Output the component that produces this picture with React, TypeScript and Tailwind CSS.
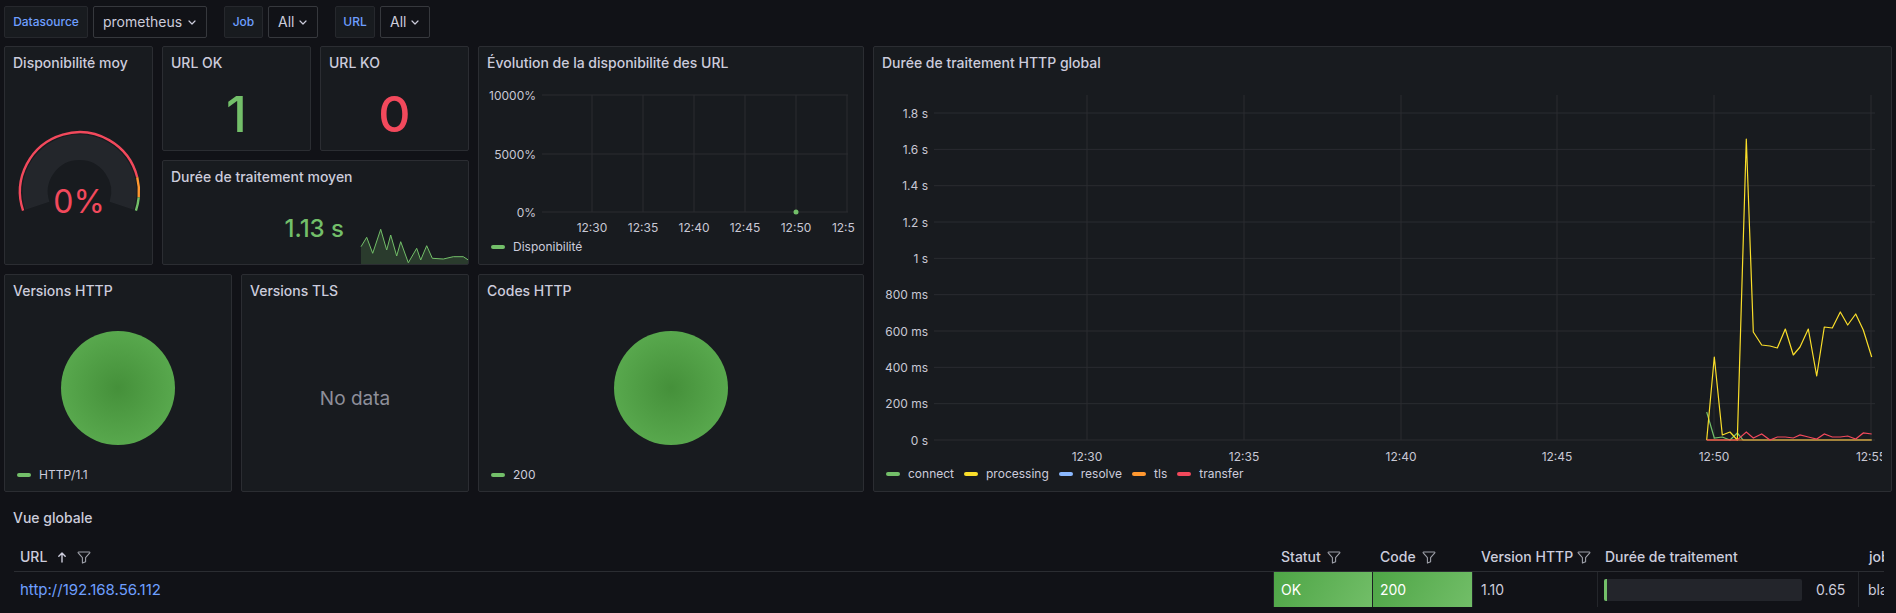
import React from 'react'

type Pt = [number, number]

const toPath = (pts: Pt[]) => pts.map((p, i) => `${i ? 'L' : 'M'}${p[0]} ${p[1]}`).join(' ')

const GRID = '#2a2c31'
const AXIS = '#c8c8d4'

function Chevron() {
  return (
    <svg width="8" height="5" viewBox="0 0 8 5" className="shrink-0">
      <path d="M1 1l3 3 3-3" fill="none" stroke="#ccccdc" strokeWidth="1.2" strokeLinecap="round" strokeLinejoin="round" />
    </svg>
  )
}

function FilterIcon() {
  return (
    <svg width="14" height="14" viewBox="0 0 14 14" className="shrink-0">
      <path
        d="M1.6 2h10.8a.5.5 0 0 1 .38.82L8.6 7.6v4.1l-3.2 1.4V7.6L1.22 2.82A.5.5 0 0 1 1.6 2z"
        fill="none"
        stroke="#9ea0a9"
        strokeWidth="1.1"
        strokeLinejoin="round"
      />
    </svg>
  )
}

function ArrowUp() {
  return (
    <svg width="10" height="12" viewBox="0 0 10 12" className="shrink-0">
      <path d="M5 11V2M1.8 5.2L5 2l3.2 3.2" fill="none" stroke="#ccccdc" strokeWidth="1.4" strokeLinecap="round" strokeLinejoin="round" />
    </svg>
  )
}

function Variable({ label, value, labelW, dropW }: { label: string; value: string; labelW: string; dropW: string }) {
  return (
    <div className="flex gap-[5px]">
      <div className={`${labelW} flex h-8 items-center justify-center rounded-[2px] border border-[#26282d] bg-[#181b1f] text-xs font-medium text-[#6e9fff]`}>
        {label}
      </div>
      <div className={`${dropW} flex h-8 items-center justify-between rounded-[2px] border border-[#36383d] bg-[#111217] pl-[9px] pr-[10px] text-sm text-[#ccccdc]`}>
        {value}
        <Chevron />
      </div>
    </div>
  )
}

function Panel({ title, className, children }: { title: string; className: string; children?: React.ReactNode }) {
  return (
    <div className={`flex flex-col overflow-hidden rounded-[2px] border border-[#2b2d32] bg-[#181b1f] ${className}`}>
      <div className="flex h-8 shrink-0 items-center px-2 text-sm font-medium text-[#ccccdc]">{title}</div>
      <div className="relative flex min-h-0 flex-1 flex-col">{children}</div>
    </div>
  )
}

function Legend({ items }: { items: { label: string; color: string }[] }) {
  return (
    <div className="flex h-[22px] shrink-0 items-center gap-[10px] pl-[12px] mb-[6px] text-xs text-[#ccccdc]">
      {items.map(it => (
        <div key={it.label} className="flex items-center gap-[8px]">
          <span className={`h-[4px] w-[14px] rounded-full ${it.color}`} />
          {it.label}
        </div>
      ))}
    </div>
  )
}

function Gauge() {
  const cx = 79.5
  const cy = 191.7
  const p = (r: number, a: number): Pt => [cx + r * Math.cos((a * Math.PI) / 180), cy - r * Math.sin((a * Math.PI) / 180)]
  const arc = (r: number, a0: number, a1: number) => {
    const [x0, y0] = p(r, a0)
    const [x1, y1] = p(r, a1)
    return `M${x0} ${y0}A${r} ${r} 0 ${a0 - a1 > 180 ? 1 : 0} 1 ${x1} ${y1}`
  }
  const start = 198.5
  const at = (f: number) => start - 217 * f
  return (
    <svg width="147" height="185" className="block">
      <g transform="translate(-5 -79)">
        <path d={arc(44.4, start, at(1))} stroke="#23262b" strokeWidth="25.4" fill="none" />
        <path d={arc(59.5, start, at(0.85))} stroke="#f2495c" strokeWidth="2.4" fill="none" />
        <path d={arc(59.5, at(0.85), at(0.94))} stroke="#ff9830" strokeWidth="2.4" fill="none" />
        <path d={arc(59.5, at(0.94), at(1))} stroke="#73bf69" strokeWidth="2.4" fill="none" />
        <text x="79" y="201" textAnchor="middle" dominantBaseline="central" fill="#f2495c" fontSize="32">
          0%
        </text>
      </g>
    </svg>
  )
}

const spark: Pt[] = [
  [361, 246.7], [366.7, 237.3], [372.7, 253.3], [380.7, 229.3], [386.7, 250], [390.7, 235], [396.7, 256],
  [400.7, 241.7], [408.3, 262.7], [416.7, 248.3], [420.7, 260], [426.7, 245.7], [432.3, 258.3], [443.3, 259],
  [453.3, 256.7], [463.3, 256.7], [468.3, 260],
]

function AvgDuration() {
  const line = toPath(spark)
  const area = `${line} L468.3 264 L361 264 Z`
  return (
    <>
      <svg width="305" height="71" className="absolute inset-0">
        <g transform="translate(-163 -193)">
          <path d={area} fill="#73bf69" fillOpacity="0.2" />
          <path d={line} fill="none" stroke="#73bf69" strokeWidth="1" />
        </g>
      </svg>
      <div className="relative flex h-full items-center">
        <div className="w-[181px] text-right text-[24px] font-medium text-[#73bf69]">1.13 s</div>
      </div>
    </>
  )
}

function Availability() {
  const xs = [592, 643, 694, 745, 796, 847]
  const labels = ['12:30', '12:35', '12:40', '12:45', '12:50', '12:55']
  const ys: [number, string][] = [[95, '10000%'], [154, '5000%'], [212, '0%']]
  return (
    <svg width="384" height="157" className="block">
      <defs>
        <clipPath id="evo-clip">
          <rect x="479" y="79" width="376" height="160" />
        </clipPath>
      </defs>
      <g transform="translate(-479 -79)" fontSize="12" fill={AXIS}>
        {ys.map(([y, t]) => (
          <g key={t}>
            <line x1="542" x2="848" y1={y} y2={y} stroke={GRID} />
            <text x="536" y={y} textAnchor="end" dominantBaseline="central">{t}</text>
          </g>
        ))}
        {xs.map(x => (
          <line key={x} x1={x} x2={x} y1="95" y2="212" stroke={GRID} />
        ))}
        <g clipPath="url(#evo-clip)">
          {xs.map((x, i) => (
            <text key={x} x={x} y="227" textAnchor="middle" dominantBaseline="central">{labels[i]}</text>
          ))}
        </g>
        <circle cx="796" cy="212" r="2.5" fill="#73bf69" />
      </g>
    </svg>
  )
}

function Pie({ id, cx }: { id: string; cx: number }) {
  return (
    <svg width="100%" height="157" className="block">
      <defs>
        <radialGradient id={id}>
          <stop offset="0%" stopColor="#45903a" />
          <stop offset="100%" stopColor="#58a84d" />
        </radialGradient>
      </defs>
      <circle cx={cx} cy="81" r="57" fill={`url(#${id})`} />
    </svg>
  )
}

const yellowPts: Pt[] = [
  [1706.7, 440], [1714.3, 357], [1722.3, 435], [1730, 432], [1737.3, 440], [1746.3, 139], [1753.3, 332],
  [1761.7, 345], [1770, 346], [1777.3, 348], [1785.3, 329], [1793.3, 355], [1800, 347], [1808.3, 329],
  [1816.7, 376], [1824.3, 327], [1832.3, 328], [1840.3, 312], [1847.7, 325], [1855.7, 314], [1863.3, 330],
  [1871.7, 357],
]
const greenPts: Pt[] = [[1706.7, 412], [1714.3, 438], [1722.3, 437], [1730, 440], [1737.3, 433], [1743, 440], [1871.7, 440]]
const redPts: Pt[] = [
  [1706.7, 440], [1737.3, 440], [1746.3, 432], [1753.3, 438], [1761.7, 434], [1770, 440], [1777.3, 437],
  [1785.3, 437], [1793.3, 438], [1800, 435], [1808.3, 437], [1816.7, 439], [1824.3, 434], [1832.3, 437],
  [1840.3, 437], [1847.7, 436], [1855.7, 439], [1863.3, 433], [1871.7, 434],
]
const orangePts: Pt[] = [[1706.7, 440], [1871.7, 440]]

function HttpDuration() {
  const yl = ['0 s', '200 ms', '400 ms', '600 ms', '800 ms', '1 s', '1.2 s', '1.4 s', '1.6 s', '1.8 s']
  const xs = [1087, 1244, 1401, 1557, 1714, 1871]
  const xl = ['12:30', '12:35', '12:40', '12:45', '12:50', '12:55']
  return (
    <svg width="1017" height="384" className="block">
      <defs>
        <clipPath id="big-clip">
          <rect x="874" y="79" width="1008" height="400" />
        </clipPath>
      </defs>
      <g transform="translate(-874 -79)" fontSize="12" fill={AXIS}>
        {yl.map((t, i) => {
          const y = 440 - i * 36.33
          return (
            <g key={t}>
              <line x1="934" x2="1875" y1={y} y2={y} stroke={GRID} />
              <text x="928" y={y} textAnchor="end" dominantBaseline="central">{t}</text>
            </g>
          )
        })}
        {xs.map(x => (
          <line key={x} x1={x} x2={x} y1="95" y2="440" stroke={GRID} />
        ))}
        <g clipPath="url(#big-clip)">
          {xs.map((x, i) => (
            <text key={x} x={x} y="456" textAnchor="middle" dominantBaseline="central">{xl[i]}</text>
          ))}
        </g>
        <path d={toPath(greenPts)} fill="none" stroke="#73bf69" strokeWidth="1.2" />
        <path d={toPath(yellowPts)} fill="none" stroke="#fade2a" strokeWidth="1.2" strokeLinejoin="round" />
        <path d={toPath(orangePts)} fill="none" stroke="#ff9830" strokeWidth="1.2" />
        <path d={toPath(redPts)} fill="none" stroke="#f2495c" strokeWidth="1.2" />
      </g>
    </svg>
  )
}

function Table() {
  return (
    <div className="mx-[9px] w-[1870px] overflow-hidden pt-[9px] text-sm text-[#ccccdc]">
      <div className="flex h-[29px] border-b border-[#2b2d32] font-medium">
        <div className="flex w-[1260px] shrink-0 items-center gap-[10px] pl-[6px]">
          URL <ArrowUp /> <FilterIcon />
        </div>
        <div className="flex w-[99px] shrink-0 items-center gap-[6px] pl-[7px]">
          Statut <FilterIcon />
        </div>
        <div className="flex w-[100px] shrink-0 items-center gap-[6px] pl-[7px]">
          Code <FilterIcon />
        </div>
        <div className="flex w-[125px] shrink-0 items-center gap-[4px] pl-[8px]">
          Version HTTP <FilterIcon />
        </div>
        <div className="flex w-[261px] shrink-0 items-center pl-[7px]">Durée de traitement</div>
        <div className="flex w-[200px] shrink-0 items-center pl-[10px]">job</div>
      </div>
      <div className="flex h-[35px]">
        <div className="flex w-[1260px] shrink-0 items-center border-r border-[#24262b] pl-[6px] text-[15px] text-[#6e9fff]">http://192.168.56.112</div>
        <div className="flex w-[99px] shrink-0 items-center border-r border-[#1c1e23] bg-[linear-gradient(120deg,#4ea546,#72be68)] pl-[7px] text-white">OK</div>
        <div className="flex w-[100px] shrink-0 items-center border-r border-[#24262b] bg-[linear-gradient(120deg,#4ea546,#72be68)] pl-[7px] text-white">200</div>
        <div className="flex w-[125px] shrink-0 items-center border-r border-[#24262b] pl-[8px]">1.10</div>
        <div className="flex w-[261px] shrink-0 items-center gap-[14px] border-r border-[#24262b] pl-[6px]">
          <div className="flex h-[22px] w-[198px] rounded-[2px] bg-[#23252b]">
            <div className="h-full w-[3px] rounded-l-[2px] bg-[#73bf69]" />
          </div>
          <span>0.65</span>
        </div>
        <div className="flex w-[200px] shrink-0 items-center pl-[9px]">blackbox</div>
      </div>
    </div>
  )
}

export default function App() {
  return (
    <div className="h-[613px] w-full overflow-hidden bg-[#111217] font-['Inter',sans-serif]">
      {/* Variables */}
      <div className="flex h-[46px] items-start gap-[17px] px-[4px] pt-[6px]">
        <Variable label="Datasource" value="prometheus" labelW="w-[84px]" dropW="w-[114px]" />
        <Variable label="Job" value="All" labelW="w-[39px]" dropW="w-[50px]" />
        <Variable label="URL" value="All" labelW="w-[40px]" dropW="w-[50px]" />
      </div>

      <div className="flex gap-[9px] px-[4px]">
        <div className="flex w-[860px] shrink-0 flex-col gap-[9px]">
          <div className="flex h-[219px] gap-[9px]">
            <Panel title="Disponibilité moy" className="w-[149px] shrink-0">
              <Gauge />
            </Panel>
            <div className="flex w-[307px] shrink-0 flex-col gap-[9px]">
              <div className="flex h-[105px] gap-[9px]">
                <Panel title="URL OK" className="w-[149px] shrink-0">
                  <div className="flex h-full items-center justify-center text-[50px] font-medium text-[#73bf69]">1</div>
                </Panel>
                <Panel title="URL KO" className="w-[149px] shrink-0">
                  <div className="flex h-full items-center justify-center text-[50px] font-medium text-[#f2495c]">0</div>
                </Panel>
              </div>
              <Panel title="Durée de traitement moyen" className="h-[105px]">
                <AvgDuration />
              </Panel>
            </div>
            <Panel title="Évolution de la disponibilité des URL" className="w-[386px] shrink-0">
              <div className="flex-1">
                <Availability />
              </div>
              <Legend items={[{ label: 'Disponibilité', color: 'bg-[#73bf69]' }]} />
            </Panel>
          </div>

          <div className="flex h-[218px] gap-[9px]">
            <Panel title="Versions HTTP" className="w-[228px] shrink-0">
              <div className="flex-1">
                <Pie id="pie-http" cx={113} />
              </div>
              <Legend items={[{ label: 'HTTP/1.1', color: 'bg-[#73bf69]' }]} />
            </Panel>
            <Panel title="Versions TLS" className="w-[228px] shrink-0">
              <div className="flex h-full items-center justify-center text-[19px] text-[#8e8f9a]">No data</div>
            </Panel>
            <Panel title="Codes HTTP" className="w-[386px] shrink-0">
              <div className="flex-1">
                <Pie id="pie-codes" cx={192} />
              </div>
              <Legend items={[{ label: '200', color: 'bg-[#73bf69]' }]} />
            </Panel>
          </div>
        </div>

        <Panel title="Durée de traitement HTTP global" className="h-[446px] w-[1019px] shrink-0">
          <div className="flex-1">
            <HttpDuration />
          </div>
          <Legend
            items={[
              { label: 'connect', color: 'bg-[#73bf69]' },
              { label: 'processing', color: 'bg-[#fade2a]' },
              { label: 'resolve', color: 'bg-[#8ab8ff]' },
              { label: 'tls', color: 'bg-[#ff9830]' },
              { label: 'transfer', color: 'bg-[#f2495c]' },
            ]}
          />
        </Panel>
      </div>

      {/* Table */}
      <div className="mx-[4px] mt-[9px] border border-transparent">
        <div className="flex h-8 items-center px-2 text-sm font-medium text-[#ccccdc]">Vue globale</div>
        <Table />
      </div>
    </div>
  )
}
